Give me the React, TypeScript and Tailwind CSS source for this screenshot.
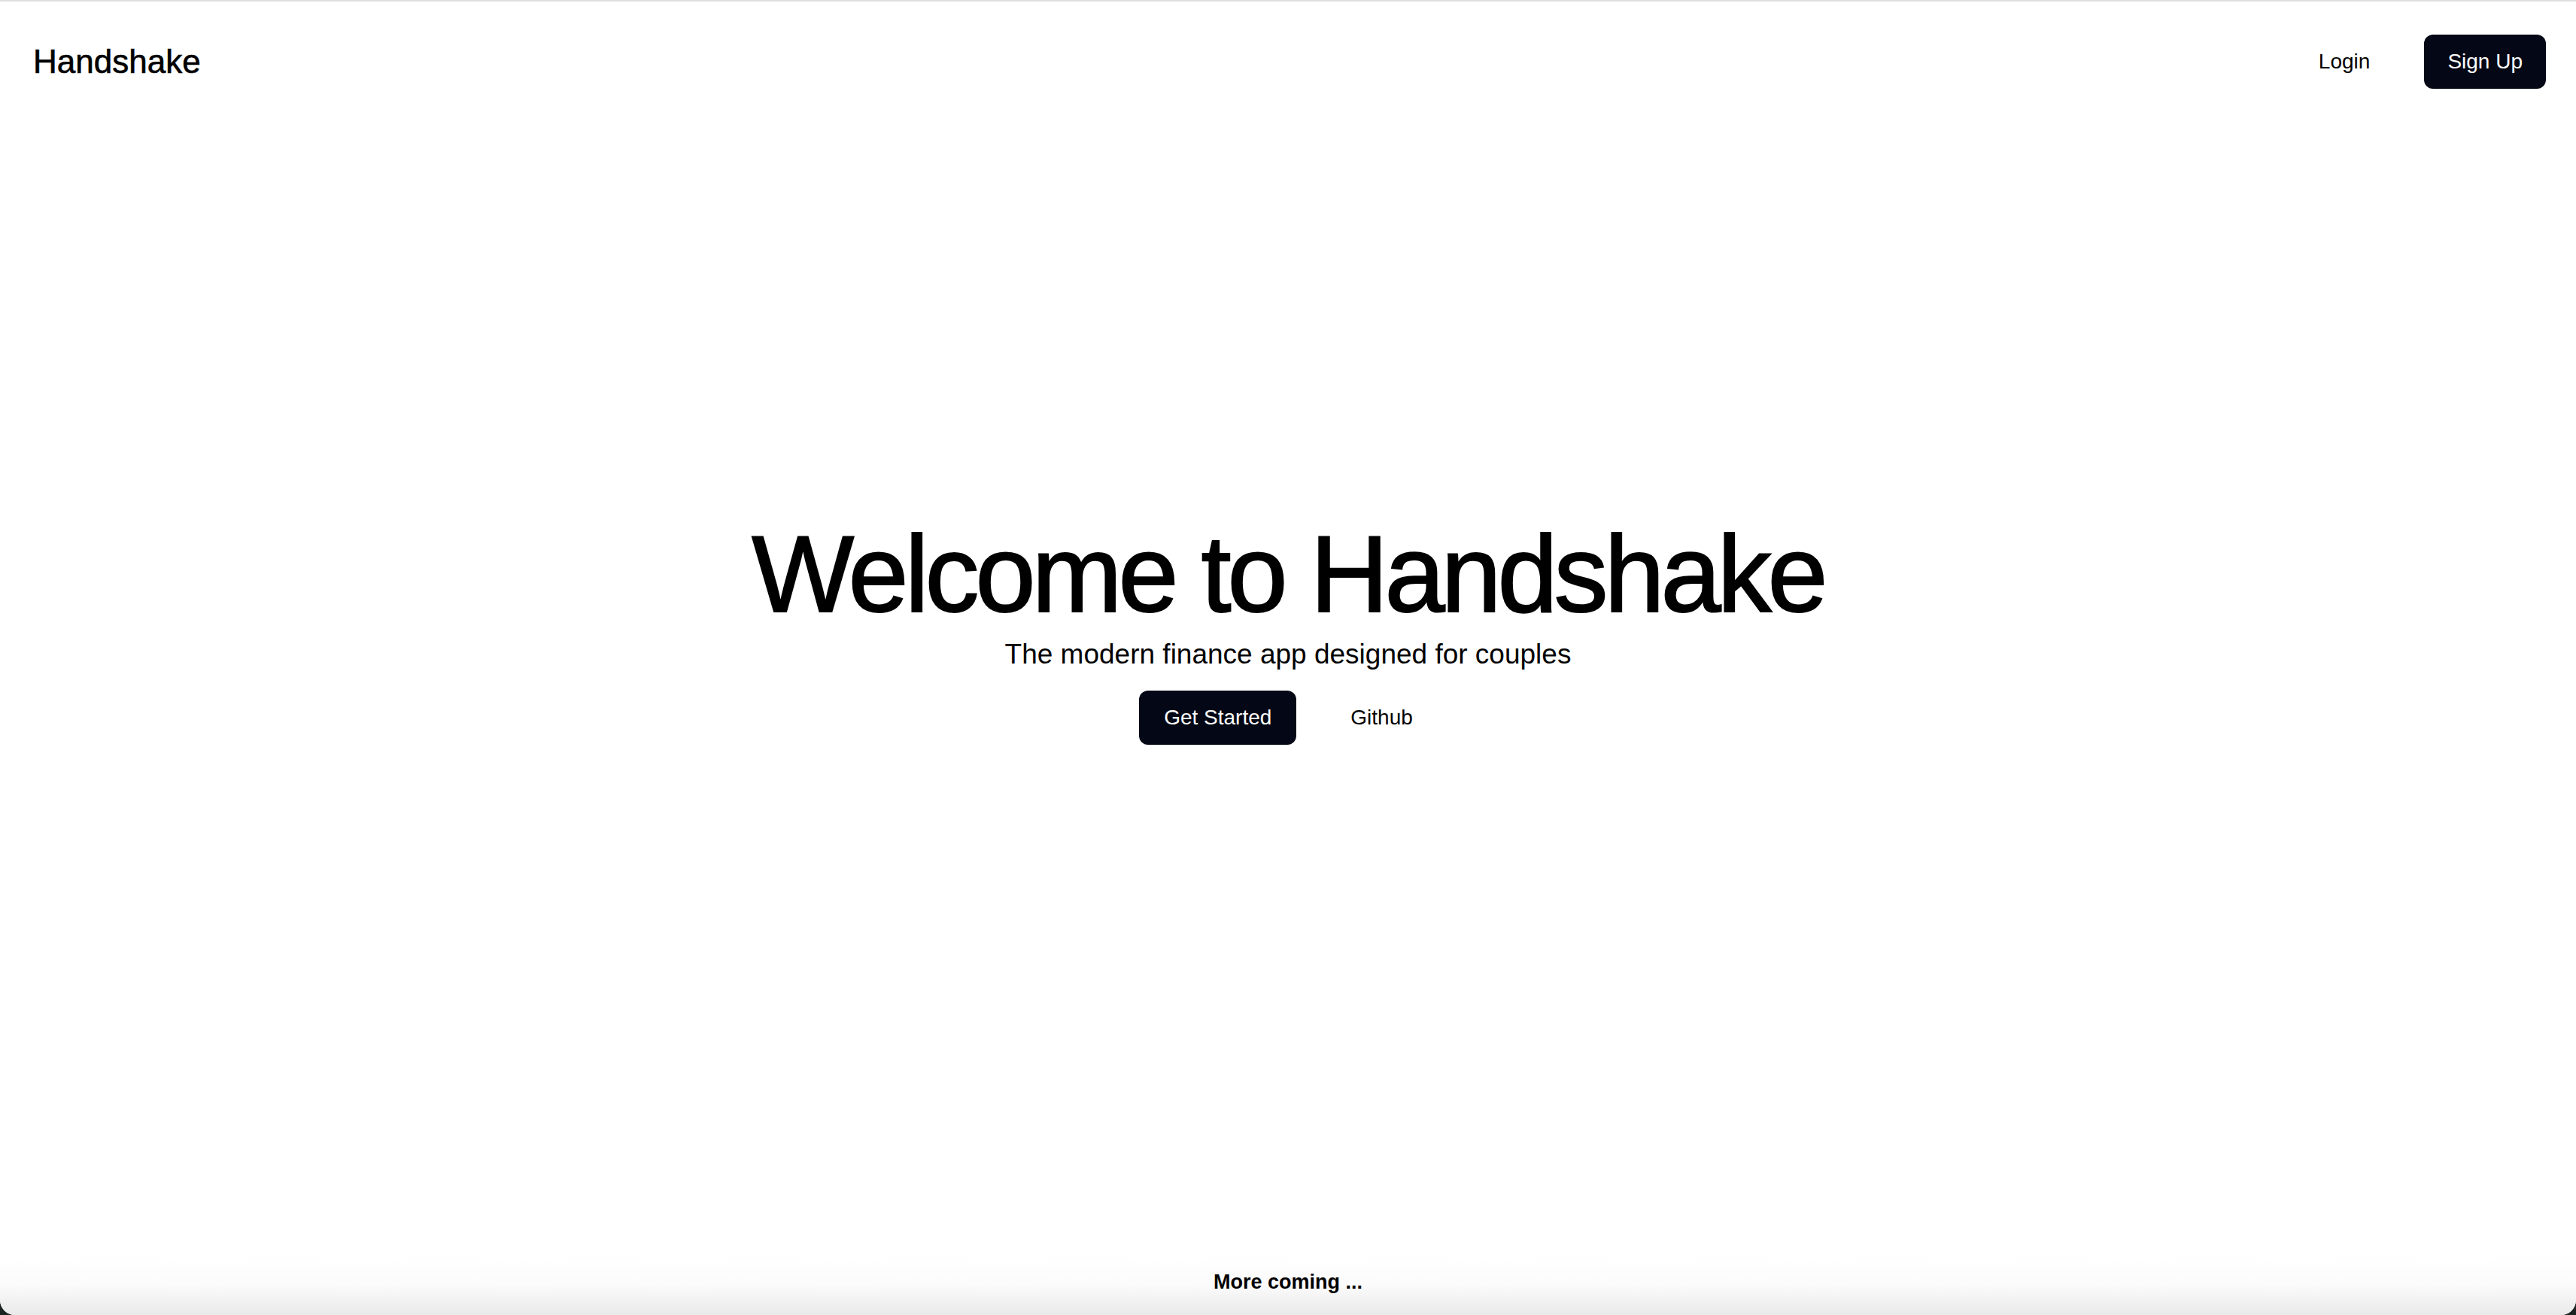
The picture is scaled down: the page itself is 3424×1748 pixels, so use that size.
import React from 'react';

const App: React.FC = () => {
  return (
    <div className="h-screen w-full bg-[#1b2420] font-['Liberation_Sans',Arial,sans-serif]">
      <div className="flex h-full flex-col overflow-hidden rounded-b-[20px] border-t-2 border-[#dedede] bg-white text-black">
        <header className="flex h-[160px] shrink-0 items-center justify-between pl-[44px] pr-[40px]">
          <span className="text-[44px] leading-none [-webkit-text-stroke:0.6px_black]">Handshake</span>
          <nav className="flex items-center gap-[40px]">
            <button className="h-[72px] px-[32px] text-[28px]">Login</button>
            <button className="h-[72px] rounded-[12px] bg-[#040816] px-[31px] text-[28px] text-white">
              Sign Up
            </button>
          </nav>
        </header>

        <main className="flex flex-1 flex-col items-center justify-center pb-[148px]">
          <h1 className="text-[144px] leading-none tracking-[-0.035em] [-webkit-text-stroke:2px_black]">
            Welcome to Handshake
          </h1>
          <p className="mt-[6px] text-[37px] leading-[56px]">The modern finance app designed for couples</p>
          <div className="mt-[20px] flex items-center gap-[40px]">
            <button className="h-[72px] rounded-[12px] bg-[#040816] px-[33px] text-[28px] text-white">
              Get Started
            </button>
            <button className="h-[72px] px-[32px] text-[28px]">Github</button>
          </div>
        </main>

        <footer className="flex h-[80px] shrink-0 justify-center bg-gradient-to-b from-white via-[#fbfbfb] to-[#e9e9e9] pt-[16px]">
          <span className="text-[27px] font-bold leading-[40px]">More coming ...</span>
        </footer>
      </div>
    </div>
  );
};

export default App;
